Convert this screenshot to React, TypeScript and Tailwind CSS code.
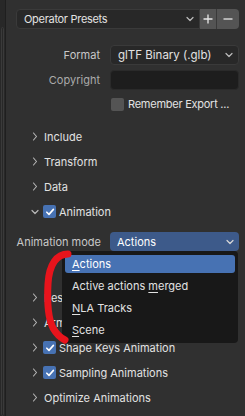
import React from "react";

const font = { fontFamily: "Inter, 'Noto Sans', sans-serif" };

function ChevDown({ className = "" }: { className?: string }) {
  return (
    <svg width="8" height="6" viewBox="0 0 8 6" className={className}>
      <path d="M1 1.5 L4 4.5 L7 1.5" fill="none" stroke="currentColor" strokeWidth="1.2" strokeLinecap="round" strokeLinejoin="round" />
    </svg>
  );
}

function ChevRight() {
  return (
    <svg width="6" height="9" viewBox="0 0 6 9" className="text-[#b8b8b8]">
      <path d="M1.5 1 L4.5 4.5 L1.5 8" fill="none" stroke="currentColor" strokeWidth="1.1" strokeLinecap="round" strokeLinejoin="round" />
    </svg>
  );
}

function Check() {
  return (
    <div className="w-[13px] h-[13px] rounded-[2px] bg-[#4772b3] flex items-center justify-center">
      <svg width="10" height="10" viewBox="0 0 10 10">
        <path d="M1.8 5.2 L4 7.4 L8.4 2.4" fill="none" stroke="white" strokeWidth="1.6" strokeLinecap="round" strokeLinejoin="round" />
      </svg>
    </div>
  );
}

function PanelRow({ label, open, checked }: { label: string; open?: boolean; checked?: boolean }) {
  return (
    <div className="h-[25px] flex items-center pl-[14px]">
      <div className="w-[9px] shrink-0 flex justify-center">
        {open ? <ChevDown className="text-[#b8b8b8]" /> : <ChevRight />}
      </div>
      {checked !== undefined && (
        <div className="ml-[4px] shrink-0">
          <Check />
        </div>
      )}
      <span className={`${checked !== undefined ? "ml-[3px]" : "ml-[5px]"} pt-[2px] text-[11px] text-[#e2e2e2] whitespace-nowrap`}>{label}</span>
    </div>
  );
}

export default function App() {
  return (
    <div className="w-[245px] h-[416px] bg-[#303030] relative overflow-hidden flex" style={font}>
      <div className="w-[6px] shrink-0 h-full bg-[#282828] border-r border-[#1f1f1f] relative">
        <div className="absolute left-[1px] top-[27px] w-[3px] bottom-0 border border-[#3a3a3a] rounded-[2px]" />
      </div>
      <div className="flex-1 min-w-0 flex flex-col pt-[9px] pl-[10px] pr-[6px]">
        {/* presets */}
        <div className="h-[20px] flex">
          <div className="w-[184px] shrink-0 h-full bg-[#282828] border border-[#3a3a3a] rounded-l-[4px] flex items-center pl-[7px] pr-[5px]">
            <span className="pt-px text-[11px] tracking-[-0.3px] text-[#e2e2e2] flex-1 whitespace-nowrap">Operator Presets</span>
            <ChevDown className="text-[#bdbdbd]" />
          </div>
          <div className="w-[16px] shrink-0 h-full bg-[#545454] flex items-center justify-center text-[#e8e8e8]">
            <svg width="10" height="10" viewBox="0 0 10 10"><path d="M5 0.5V9.5M0.5 5H9.5" stroke="currentColor" strokeWidth="1.3" /></svg>
          </div>
          <div className="w-[1px] shrink-0 h-full bg-[#3a3a3a]" />
          <div className="w-[22px] shrink-0 h-full bg-[#545454] rounded-r-[4px] flex items-center justify-center text-[#e8e8e8]">
            <svg width="10" height="10" viewBox="0 0 10 10"><path d="M0.5 5H9.5" stroke="currentColor" strokeWidth="1.3" /></svg>
          </div>
        </div>

        {/* format */}
        <div className="h-[20px] mt-[16px] flex items-center">
          <div className="w-[84px] shrink-0 pt-px text-right text-[11px] text-[#c8c8c8]">Format</div>
          <div className="ml-[10px] w-[129px] shrink-0 h-full bg-[#282828] border border-[#3a3a3a] rounded-[4px] flex items-center pl-[7px] pr-[5px]">
            <span className="pt-px flex-1 text-[11.5px] text-[#e2e2e2] whitespace-nowrap">glTF Binary (.glb)</span>
            <ChevDown className="text-[#bdbdbd]" />
          </div>
        </div>

        {/* copyright */}
        <div className="h-[20px] mt-[5px] flex items-center">
          <div className="w-[84px] shrink-0 pt-px text-right text-[11px] text-[#ababab]">Copyright</div>
          <div className="ml-[10px] w-[129px] shrink-0 h-full bg-[#1d1d1d] border border-[#2a2a2a] rounded-[4px]" />
        </div>

        {/* remember */}
        <div className="h-[20px] mt-[4px] flex items-center pl-[95px]">
          <div className="w-[13px] h-[13px] shrink-0 rounded-[2px] bg-[#545454]" />
          <span className="ml-[4px] pt-px text-[11px] tracking-[-0.25px] text-[#e2e2e2] whitespace-nowrap">Remember Export ...</span>
        </div>

        <div className="mt-[10px]">
          <PanelRow label="Include" />
          <PanelRow label="Transform" />
          <PanelRow label="Data" />
          <PanelRow label="Animation" open checked />
        </div>

        {/* animation mode */}
        <div className="h-[19px] mt-[8px] flex items-center">
          <div className="w-[85px] shrink-0 pt-px text-right text-[11px] text-[#c8c8c8] whitespace-nowrap">Animation mode</div>
          <div className="ml-[9px] w-[129px] shrink-0 h-full bg-[#3d5a8a] rounded-[4px] flex items-center pl-[7px] pr-[5px]">
            <span className="pt-px flex-1 text-[11px] text-[#ffffff]">Actions</span>
            <ChevDown className="text-[#d8d8d8]" />
          </div>
        </div>

        <div className="mt-[34px]">
          <PanelRow label="Rest & Ranges" />
          <PanelRow label="Armature" />
          <PanelRow label="Shape Keys Animation" checked />
          <PanelRow label="Sampling Animations" checked />
          <PanelRow label="Optimize Animations" />
        </div>
      </div>

      {/* dropdown menu */}
      <div className="absolute left-[62px] top-[251px] w-[176px] h-[92px] bg-[#181818] rounded-[4px] py-[2px] px-[3px] flex flex-col">
        {[
          { pre: "", u: "A", post: "ctions", sel: true },
          { pre: "Active actions\u00a0", u: "m", post: "erged" },
          { pre: "", u: "N", post: "LA Tracks" },
          { pre: "", u: "S", post: "cene" },
        ].map((it, i) => (
          <div key={i} className="h-[22px] py-[2px]">
            <div className={`h-[18px] rounded-[3px] flex items-center pl-[7px] ${it.sel ? "bg-[#4772b3] text-white" : "text-[#e2e2e2]"}`}>
              <span className="pt-px text-[11px] whitespace-pre">
                {it.pre}
                <u className="underline-offset-2">{it.u}</u>
                {it.post}
              </span>
            </div>
          </div>
        ))}
      </div>

      {/* red annotation stroke */}
      <svg className="absolute left-0 top-0 pointer-events-none" width="245" height="416" viewBox="0 0 245 416">
        <path d="M68 254 C 57 254, 49 264, 48 284 C 47 302, 48 318, 53 328 C 57 335, 61 338, 65 340" fill="none" stroke="#e8141c" strokeWidth="7" strokeLinecap="round" />
      </svg>
    </div>
  );
}
